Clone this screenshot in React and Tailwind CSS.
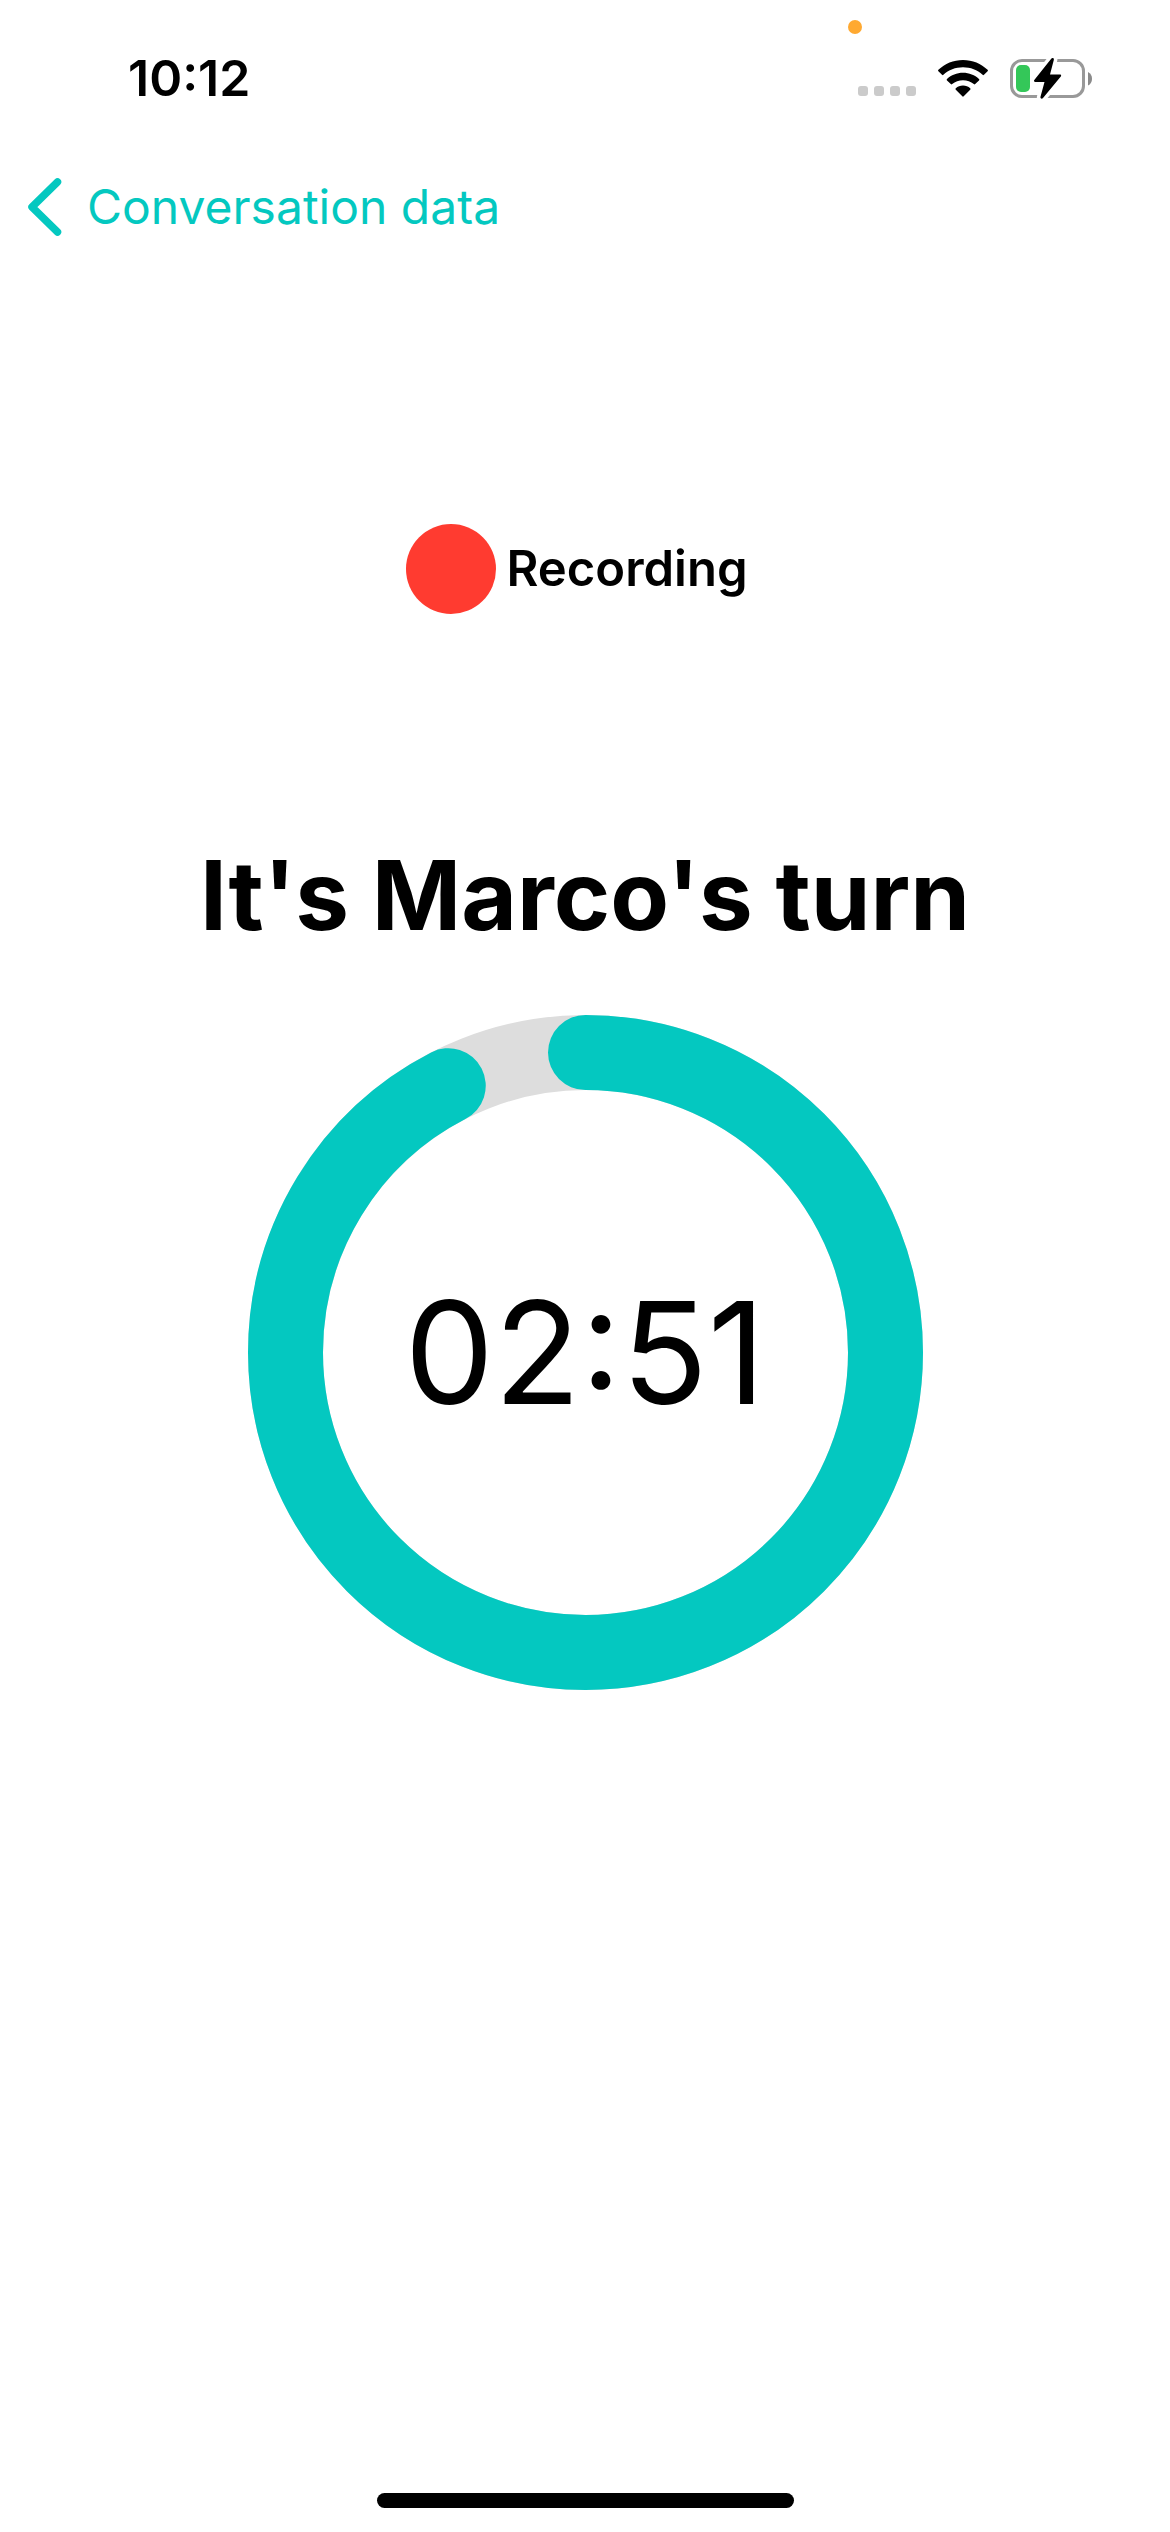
const RING_LENGTH = 2 * Math.PI * 300;

function CellularDots() {
  return (
    <div className="mt-[26px] flex gap-[6px]" role="img" aria-label="No cellular signal">
      <span className="size-[10px] rounded-[3px] bg-[#cbcbcb]" />
      <span className="size-[10px] rounded-[3px] bg-[#cbcbcb]" />
      <span className="size-[10px] rounded-[3px] bg-[#cbcbcb]" />
      <span className="size-[10px] rounded-[3px] bg-[#cbcbcb]" />
    </div>
  );
}

function WifiIcon() {
  return (
    <svg className="h-[37px] w-[50px]" viewBox="0 0 50 37" role="img" aria-label="Wi-Fi">
      <path d="M25 0C34.5 0 43.200 3.700 49.600 9.800Q50.300 10.500 49.600 11.200L46 14.800Q45.300 15.500 44.600 14.800C39.400 9.900 32.500 7.200 25 7.200S10.600 9.900 5.400 14.800Q4.700 15.500 4 14.800L.4 11.200Q-.3 10.500 .4 9.800C6.800 3.700 15.500 0 25 0Z" />
      <path d="M25 12.800C31.200 12.800 36.800 15.100 41 18.900Q41.800 19.600 41 20.400L37.200 24.100Q36.500 24.800 35.800 24.100C32.900 21.600 29.100 20.200 25 20.200S17.100 21.600 14.200 24.100Q13.500 24.800 12.800 24.100L9 20.400Q8.200 19.600 9 18.900C13.200 15.100 18.800 12.800 25 12.800Z" />
      <path d="M25 25.500C27.800 25.500 30.300 26.500 32.200 28.200Q33 28.900 32.200 29.700L25.700 36.300Q25 37 24.300 36.300L17.800 29.700Q17 28.900 17.800 28.200C19.700 26.500 22.200 25.500 25 25.500Z" />
    </svg>
  );
}

function BatteryIcon() {
  return (
    <svg className="h-[41px] w-[82px]" viewBox="0 0 82 41" role="img" aria-label="Battery charging">
      <rect x="1.500" y="2.500" width="72" height="36" rx="10.500" fill="none" stroke="#999" strokeWidth="3" />
      <path d="M78 14V27.500C80.600 26.300 82 23.700 82 20.700S80.600 15.200 78 14Z" fill="#8a8a8a" />
      <rect x="6" y="7" width="14" height="27" rx="5" fill="#34c759" />
      <path
        d="M41.200 .8C42.200 -.6 44.300 .1 43.800 2L40 16.500H50C51.100 16.500 51.500 17.700 50.800 18.500L33 40C32 41.300 30 40.600 30.500 38.800L34.500 24H25.200C24 24 23.600 22.800 24.300 22Z"
        fill="#000"
        stroke="#fff"
        strokeWidth="7"
        paintOrder="stroke"
      />
    </svg>
  );
}

function StatusBar() {
  return (
    <header className="relative flex h-[156px] items-center justify-between pr-[78px] pl-[128px]">
      <time className="text-[50px] font-semibold">10:12</time>
      <span className="absolute top-[20px] right-[308px] size-[14px] rounded-full bg-[#ffa931]" />
      <div className="flex items-center gap-[22px]">
        <CellularDots />
        <WifiIcon />
        <BatteryIcon />
      </div>
    </header>
  );
}

function CountdownRing({ elapsed, label }) {
  return (
    <div className="mt-[60px] grid place-items-center" role="timer">
      <svg className="col-start-1 row-start-1 size-[675px]" viewBox="0 0 675 675" aria-hidden="true">
        <g fill="none" strokeWidth="75" transform="rotate(-90 337.5 337.5)">
          <circle cx="337.5" cy="337.5" r="300" stroke="#dddddd" />
          <circle
            cx="337.5"
            cy="337.5"
            r="300"
            stroke="#04c8c0"
            strokeLinecap="round"
            strokeDasharray={`${RING_LENGTH * elapsed} ${RING_LENGTH}`}
          />
        </g>
      </svg>
      <span className="col-start-1 row-start-1 text-[142px]">{label}</span>
    </div>
  );
}

export default function App() {
  return (
    <div className="flex min-h-screen flex-col bg-white font-['Inter',sans-serif] leading-tight text-black">
      <StatusBar />
      <nav className="flex h-[102px] items-center pl-[26px]">
        <button type="button" className="flex items-center gap-[24px] text-[48px] text-[#04c8c0]">
          <svg className="h-[60px] w-[37px]" viewBox="0 0 37 60" fill="none" aria-hidden="true">
            <path d="M31.500 5L6 30L31.500 55" stroke="currentColor" strokeWidth="7.500" strokeLinecap="round" strokeLinejoin="round" />
          </svg>
          Conversation data
        </button>
      </nav>
      <main className="flex flex-1 flex-col items-center pt-[266px]">
        <div className="flex items-center gap-[10px] pr-4" role="status">
          <span className="size-[90px] rounded-full bg-[#ff3b30]" />
          <span className="text-[49px] font-semibold">Recording</span>
        </div>
        <h1 className="mt-[221px] text-[96px] leading-[120px] font-bold">It's Marco's turn</h1>
        <CountdownRing elapsed={0.924} label="02:51" />
      </main>
      <footer className="flex justify-center pb-[24px]">
        <div className="h-[15px] w-[417px] rounded-full bg-black" />
      </footer>
    </div>
  );
}
